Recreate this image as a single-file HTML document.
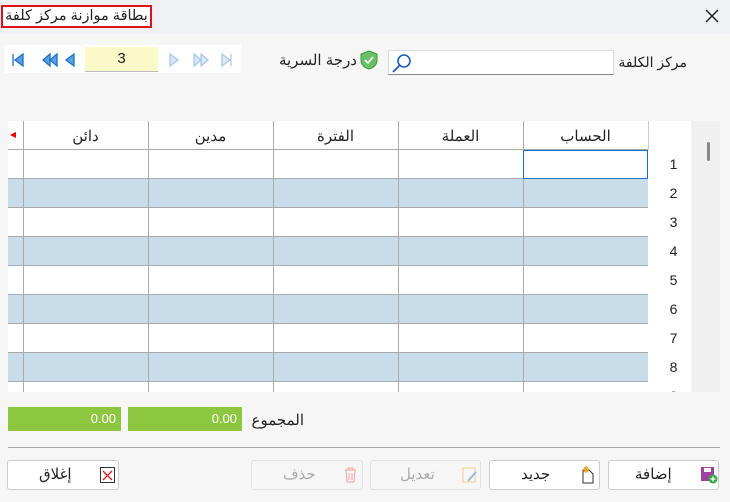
<!DOCTYPE html>
<html><head><meta charset="utf-8"><style>
*{box-sizing:border-box;margin:0;padding:0}
body{width:730px;height:502px;background:#f6f6f6;font-family:"Liberation Sans","Noto Sans CJK SC",sans-serif;position:relative;overflow:hidden;color:#222}
.a{position:absolute}
.t{font-size:15px;white-space:nowrap}
</style></head><body>
<div class="a" style="left:0;top:0;width:730px;height:34px;background:#eff1f4"></div>
<div class="a t" style="left:1px;top:5px;width:151px;height:23px;border:2px solid #e0101a;background:#fff;direction:rtl;text-align:center;line-height:19px;font-size:14.5px">بطاقة موازنة مركز كلفة</div>
<svg class="a" style="left:705px;top:9px" width="14" height="14"><path d="M1 1L13 13M13 1L1 13" stroke="#222" stroke-width="1.5"/></svg>

<div class="a" style="left:5px;top:45px;width:236px;height:28px;background:#fff"></div>
<svg class="a" style="left:10px;top:52px" width="230" height="16">
<g fill="#5aa0e0" stroke="#1a6fc9" stroke-width="1.3"><path d="M3 2V14"/><path d="M13 2L5 8L13 14Z"/><path d="M40 2L33 8L40 14Z M47 2L40 8L47 14Z"/><path d="M64 2L56 8L64 14Z"/></g>
<g fill="#d8e8f6" stroke="#a8c8e6" stroke-width="1.3"><path d="M160 2L168 8L160 14Z"/><path d="M184 2L191 8L184 14Z M191 2L198 8L191 14Z"/><path d="M212 2L220 8L212 14Z M221 2V14"/></g>
</svg>
<div class="a" style="left:85px;top:47px;width:73px;height:25px;background:#fafac8;border-bottom:1px solid #bbb;text-align:center;line-height:24px;font-size:15px">3</div>

<div class="a t" style="right:373px;top:51px;direction:rtl">درجة السرية</div>
<svg class="a" style="left:360px;top:50px" width="18" height="20"><path d="M9 1L17 4V10C17 15 13 18 9 19C5 18 1 15 1 10V4Z" fill="#6cc06a" stroke="#3a9a3a"/><path d="M5 10L8 13L13 7" fill="none" stroke="#fff" stroke-width="1.6"/></svg>
<div class="a" style="left:388px;top:50px;width:226px;height:25px;background:#fff;border:1px solid #ddd;border-bottom:1px solid #888"></div>
<svg class="a" style="left:390px;top:52px" width="24" height="22"><circle cx="14" cy="9" r="6" fill="none" stroke="#1a5fb4" stroke-width="1.6"/><path d="M10 13L3 20" stroke="#1a5fb4" stroke-width="1.8"/></svg>
<div class="a t" style="right:43px;top:54px;direction:rtl;font-size:14px">مركز الكلفة</div>

<div class="a" style="left:8px;top:121px;width:683px;height:271px;background:#fff;overflow:hidden">
<div class="a" style="left:0;top:29px;width:640px;height:260px;background:repeating-linear-gradient(#fff 0 29px,#c9dcea 29px 58px)"></div>
<div class="a" style="left:0;top:0;width:640px;height:271px;background:repeating-linear-gradient(to bottom,transparent 0 28px,#aaa 28px 29px)"></div>
<div class="a" style="left:0;top:0;width:640px;height:29px;background:#fff;border-bottom:1px solid #aaa"></div>
</div>
<div class="a" style="left:23px;top:121px;width:1px;height:271px;background:#aaa"></div>
<div class="a" style="left:148px;top:121px;width:1px;height:271px;background:#aaa"></div>
<div class="a" style="left:273px;top:121px;width:1px;height:271px;background:#aaa"></div>
<div class="a" style="left:398px;top:121px;width:1px;height:271px;background:#aaa"></div>
<div class="a" style="left:523px;top:121px;width:1px;height:271px;background:#aaa"></div>
<div class="a" style="left:648px;top:121px;width:1px;height:30px;background:#ccc"></div>
<div class="a" style="left:523px;top:150px;width:125px;height:29px;border:1px solid #1a6fc9"></div>
<svg class="a" style="left:9px;top:131px" width="8" height="8"><path d="M7 1L1 4L7 7Z" fill="#e00"/></svg>
<div class="a t" style="left:23px;top:127px;width:125px;text-align:center">دائن</div>
<div class="a t" style="left:148px;top:127px;width:125px;text-align:center">مدين</div>
<div class="a t" style="left:273px;top:127px;width:125px;text-align:center">الفترة</div>
<div class="a t" style="left:398px;top:127px;width:125px;text-align:center">العملة</div>
<div class="a t" style="left:523px;top:127px;width:125px;text-align:center">الحساب</div>
<div class="a" style="left:648px;top:150px;width:43px;height:242px;background:#fff;overflow:hidden;font-size:14px;line-height:29px;text-align:center;padding-left:8px">1<br>2<br>3<br>4<br>5<br>6<br>7<br>8<br>9</div>
<div class="a" style="left:691px;top:121px;width:29px;height:271px;background:#f0f0f0"></div>
<div class="a" style="left:707px;top:142px;width:3px;height:19px;background:#888;border-radius:2px"></div>

<div class="a" style="left:8px;top:407px;width:113px;height:24px;background:#8dc63f;color:#fff;text-align:right;padding-right:5px;line-height:24px;font-size:13px">0.00</div>
<div class="a" style="left:128px;top:407px;width:114px;height:24px;background:#8dc63f;color:#fff;text-align:right;padding-right:5px;line-height:24px;font-size:13px">0.00</div>
<div class="a t" style="right:426px;top:411px;direction:rtl">المجموع</div>
<div class="a" style="left:8px;top:447px;width:712px;height:1px;background:#aaa"></div>

<div class="a" style="left:7px;top:460px;width:112px;height:30px;background:#fff;border:1px solid #ccc;border-radius:3px"></div>
<div class="a t" style="left:39px;top:465px">إغلاق</div>
<svg class="a" style="left:100px;top:467px" width="15" height="16"><rect x="0.5" y="0.5" width="14" height="15" fill="#fff" stroke="#333"/><path d="M3 4L12 13M12 4L3 13" stroke="#e02020" stroke-width="1.3"/></svg>

<div class="a" style="left:251px;top:460px;width:112px;height:30px;background:#f6f6f6;border:1px solid #e2e2e2;border-radius:3px"></div>
<div class="a t" style="left:283px;top:465px;color:#aaa">حذف</div>
<svg class="a" style="left:344px;top:467px" width="13" height="16"><path d="M1 3H12M4 3V1H9V3M2 3L3 15H10L11 3M5 6V13M8 6V13" fill="none" stroke="#f2a0a0"/></svg>

<div class="a" style="left:370px;top:460px;width:111px;height:30px;background:#f6f6f6;border:1px solid #e2e2e2;border-radius:3px"></div>
<div class="a t" style="left:400px;top:465px;color:#aaa">تعديل</div>
<svg class="a" style="left:462px;top:467px" width="16" height="16"><rect x="1" y="1" width="12" height="14" fill="none" stroke="#f2d090"/><path d="M6 14L14 5" stroke="#a0b8e0" stroke-width="2"/></svg>

<div class="a" style="left:489px;top:460px;width:111px;height:30px;background:#fff;border:1px solid #ccc;border-radius:3px"></div>
<div class="a t" style="left:521px;top:465px">جديد</div>
<svg class="a" style="left:580px;top:465px" width="16" height="19"><path d="M3 5H9L13 9V18H3Z" fill="#fff" stroke="#333"/><path d="M6 1V8M2.5 4.5H9.5M4 2L8 7M8 2L4 7" stroke="#e8a020" stroke-width="1.2"/></svg>

<div class="a" style="left:608px;top:460px;width:111px;height:30px;background:#fff;border:1px solid #ccc;border-radius:3px"></div>
<div class="a t" style="left:635px;top:465px">إضافة</div>
<svg class="a" style="left:700px;top:466px" width="18" height="18"><rect x="1" y="1" width="13" height="14" fill="#a040a0"/><rect x="4" y="2" width="7" height="4" fill="#fff"/><circle cx="13" cy="13" r="4.5" fill="#3aa84a"/><path d="M13 10.5V15.5M10.5 13H15.5" stroke="#fff" stroke-width="1.3"/></svg>
</body></html>
